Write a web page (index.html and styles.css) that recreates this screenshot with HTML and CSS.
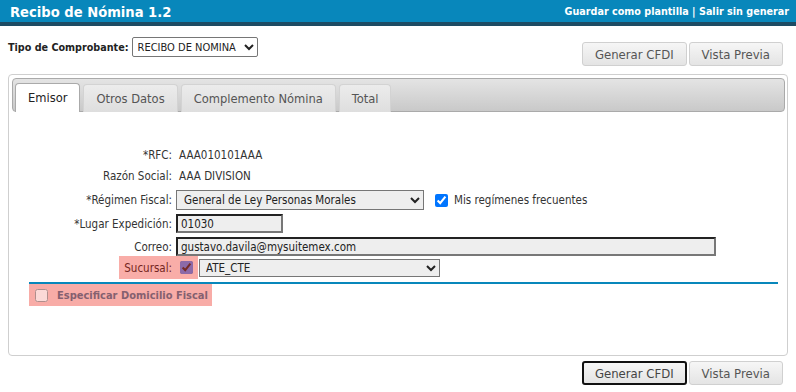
FILE: index.html
```html
<!DOCTYPE HTML>
<html>
<head>
    <title>Recibo de Nómina 1.2</title>
    <link rel="stylesheet" href="styles.css">
</head>
<body>
    <div class="topBar">
        <span class="title">Recibo de Nómina 1.2</span>
        <span class="links"><a href="#">Guardar como plantilla</a> | <a href="#">Salir sin generar</a></span>
    </div>

    <div class="toolbar">
        <div class="tipo">
            <b>Tipo de Comprobante:</b>
            <select class="tipoSel">
                <option>RECIBO DE NOMINA</option>
            </select>
        </div>
        <div class="actions upper">
            <button class="btn">Generar CFDI</button>
            <button class="btn">Vista Previa</button>
        </div>
    </div>

    <div class="panel">
        <ul class="tabBar">
            <li class="tab active">Emisor</li>
            <li class="tab">Otros Datos</li>
            <li class="tab">Complemento Nómina</li>
            <li class="tab">Total</li>
        </ul>

        <div class="form">
            <div class="row r-rfc">
                <label class="lbl">*RFC:</label>
                <span class="val">AAA010101AAA</span>
            </div>
            <div class="row r-razon">
                <label class="lbl">Razón Social:</label>
                <span class="val">AAA DIVISION</span>
            </div>
            <div class="row r-regimen">
                <label class="lbl">*Régimen Fiscal:</label>
                <select class="selRegimen">
                    <option>General de Ley Personas Morales</option>
                </select>
                <input type="checkbox" class="chkFrec" checked>
                <span class="chkText">Mis regímenes frecuentes</span>
            </div>
            <div class="row r-input">
                <label class="lbl">*Lugar Expedición:</label>
                <input type="text" class="txt txtCp" value="01030">
            </div>
            <div class="row r-input">
                <label class="lbl">Correo:</label>
                <input type="text" class="txt txtMail" value="gustavo.davila@mysuitemex.com">
            </div>
            <div class="row r-sucursal">
                <label class="lbl hl">Sucursal:</label>
                <input type="checkbox" class="chkSuc" checked>
                <select class="selSucursal">
                    <option>ATE_CTE</option>
                </select>
            </div>
            <div class="blueLine"></div>
            <div class="domicilio">
                <input type="checkbox" class="chkDom">
                <b>Especificar Domicilio Fiscal</b>
            </div>
        </div>
    </div>

    <div class="actions lower">
        <button class="btn focused">Generar CFDI</button>
        <button class="btn">Vista Previa</button>
    </div>
</body>
</html>
```

FILE: styles.css
```css
body {
    margin: 0;
    font-family: "DejaVu Sans Condensed", "DejaVu Sans", sans-serif;
    font-size: 11.5px;
    color: #333;
    background: #fff;
}

.topBar {
    height: 22px;
    background-color: #0887bb;
    border-bottom: 4px solid #1d4b63;
    display: flex;
    align-items: center;
    justify-content: space-between;
    padding: 0 7px 0 10px;
    color: #fff;
}

.title {
    font-size: 14.6px;
    font-weight: bold;
}

.links {
    font-weight: bold;
    font-size: 10.7px;
}

.links a {
    color: #fff;
    text-decoration: none;
}

.toolbar {
    display: flex;
    justify-content: space-between;
    align-items: flex-start;
    padding: 11px 13px 0 8px;
    height: 37px;
}

.tipo {
    display: flex;
    align-items: center;
    gap: 3px;
}

.tipo b {
    color: #222;
    font-size: 10.7px;
}

.tipoSel {
    width: 126px;
    height: 20px;
    font-family: inherit;
    font-size: 11px;
    color: #222;
    border: 1px solid #767676;
    border-radius: 2px;
    background: #fff;
    padding: 0 1px;
}

.actions {
    display: flex;
    gap: 2px;
}

.upper {
    margin-top: 5px;
}

.lower {
    justify-content: flex-end;
    padding: 5px 13px 0 0;
}

.btn {
    height: 24px;
    padding: 0 12px;
    font-family: inherit;
    font-size: 13px;
    color: #555;
    border: 1px solid #d0d0d0;
    border-radius: 3px;
    background: linear-gradient(#f6f6f6, #e4e4e4);
}

.btn.focused {
    border: 2px solid #111;
    padding: 0 11px;
    color: #444;
}

.panel {
    margin: 0 8px 0 8px;
    border: 1px solid #cfcfcf;
    border-radius: 4px;
    padding: 3px 2px 49px 3px;
}

.tabBar {
    list-style: none;
    margin: 0;
    padding: 3px 0 0 2px;
    height: 29px;
    display: flex;
    gap: 3px;
    align-items: flex-end;
    border: 1px solid #aaa;
    border-radius: 4px;
    background: linear-gradient(#e4e4e4, #c9c9c9);
}

.tab {
    height: 27px;
    line-height: 27px;
    padding: 0 12px;
    font-size: 12.8px;
    color: #555;
    border: 1px solid #d3d3d3;
    border-bottom: none;
    border-radius: 4px 4px 0 0;
    background: linear-gradient(#ececec, #dedede);
    margin-bottom: -1px;
}

.tab.active {
    background: #fff;
    border-color: #aaa;
    color: #222;
    height: 28px;
}

.form {
    padding: 34px 7px 0 17px;
}

.row {
    display: flex;
    align-items: center;
}

.lbl {
    width: 143px;
    text-align: right;
    margin-right: 4px;
    color: #333;
}

.val {
    padding-left: 3px;
    color: #333;
}

.r-rfc {
    height: 18px;
}

.r-razon {
    height: 18px;
    margin-top: 3px;
}

.r-regimen {
    height: 20px;
    margin-top: 5px;
}

.r-input {
    height: 19px;
    margin-top: 4px;
}

.r-sucursal {
    height: 23px;
}

select {
    font-family: inherit;
    font-size: 11.5px;
    color: #222;
}

.selRegimen {
    width: 248px;
    height: 20px;
    border: 1px solid #767676;
    background: #eee;
    padding: 0 3px;
}

.chkFrec {
    width: 13px;
    height: 13px;
    margin: 0 6px 0 11px;
}

.txt {
    box-sizing: border-box;
    height: 19px;
    font-family: inherit;
    font-size: 11.5px;
    color: #222;
    padding: 0 3px;
    background: #eee;
    border: 2px solid;
    border-color: #222 #777 #777 #222;
}

.txtCp {
    width: 107px;
}

.txtMail {
    width: 540px;
}

.hl {
    position: relative;
}

.hl::after {
    content: "";
    position: absolute;
    top: -5px;
    right: -26px;
    width: 79px;
    height: 23px;
    background: rgba(236, 14, 0, 0.34);
    z-index: 2;
}

.chkSuc {
    width: 13px;
    height: 13px;
    margin: 0 6px 0 4px;
    accent-color: #5a9aff;
}

.selSucursal {
    width: 241px;
    height: 18px;
    border: 1px solid #767676;
    background: #eee;
    padding: 0 2px;
}

.blueLine {
    height: 2px;
    background: #0887bb;
    margin-top: 3px;
}

.domicilio {
    width: 183px;
    height: 22px;
    display: flex;
    align-items: center;
    background: #f8aca7;
    color: #85606f;
    white-space: nowrap;
}

.domicilio b {
    font-size: 11px;
}

.chkDom {
    width: 13px;
    height: 13px;
    margin: 0 9px 0 6px;
    opacity: 0.55;
}
```
